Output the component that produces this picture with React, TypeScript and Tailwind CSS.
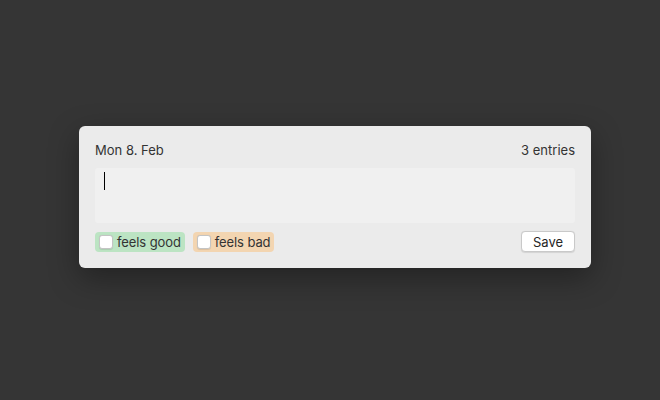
import React from "react";

function Tag({ label, bg }: { label: string; bg: string }) {
  return (
    <label className={`flex items-center h-[20px] rounded-[4px] pl-[4px] pr-[4px] gap-[4px] ${bg}`}>
      <span className="w-[14px] h-[14px] rounded-[3px] bg-white border border-[#c4c4c4] shadow-[0_0.5px_1px_rgba(0,0,0,0.1)]" />
      <span className="text-[13px] leading-[16px] text-[#333333] tracking-[-0.1px]">{label}</span>
    </label>
  );
}

export default function App() {
  return (
    <div
      className="w-[660px] h-[400px] bg-[#353535] flex items-start pl-[79px] pt-[126px]"
      style={{ fontFamily: "Inter, 'Noto Sans', sans-serif" }}
    >
      <div className="w-[512px] h-[142px] bg-[#ebebeb] rounded-[6px] shadow-[0_10px_30px_rgba(0,0,0,0.35)] p-4 flex flex-col">
        <div className="flex justify-between text-[13px] leading-[16px] text-[#333333]">
          <span>Mon 8. Feb</span>
          <span>3 entries</span>
        </div>
        <div className="mt-[10px] h-[55px] bg-[#f0f0f0] rounded-[3px] pl-[9px] pt-[4px]">
          <div className="w-[1px] h-[18px] bg-black" />
        </div>
        <div className="mt-[8px] flex items-center justify-between">
          <div className="flex gap-[8px]">
            <Tag label="feels good" bg="bg-[#bce4c3]" />
            <Tag label="feels bad" bg="bg-[#f3d5b1]" />
          </div>
          <button className="w-[54px] h-[21px] bg-white rounded-[4px] border border-[#c9c9c9] shadow-[0_0.5px_1px_rgba(0,0,0,0.1)] text-[13px] leading-[16px] text-[#262626]">
            Save
          </button>
        </div>
      </div>
    </div>
  );
}
